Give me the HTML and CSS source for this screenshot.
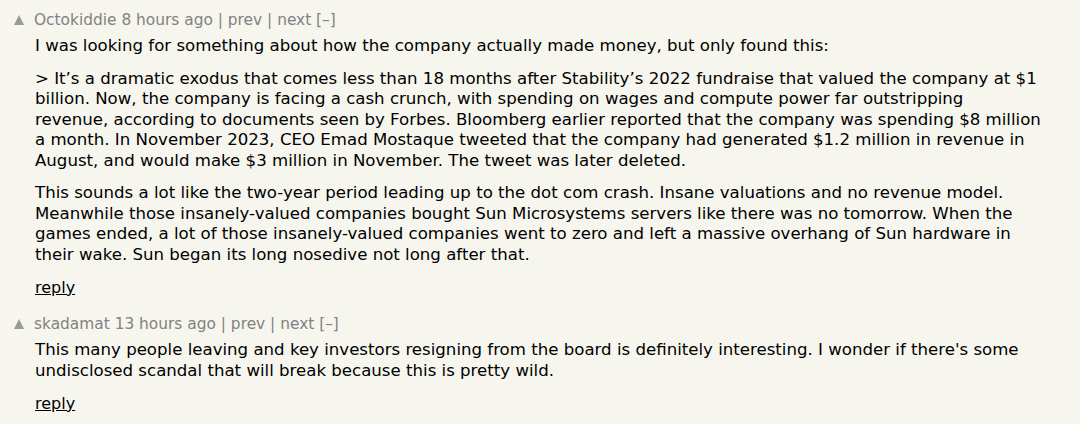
FILE: index.html
```html
<!DOCTYPE html>
<html lang="en">

<head>
  <meta charset="UTF-8">
  <title>Comments</title>
  <link rel="stylesheet" href="styles.css">
</head>

<body>
  <div class="thread">
    <div class="comment">
      <div class="head">
        <span class="vote"></span>
        <span class="meta">Octokiddie 8 hours ago | prev | next [–]</span>
      </div>
      <div class="text">
        <p>I was looking for something about how the company actually made money, but only found this:</p>
        <p>&gt; It’s a dramatic exodus that comes less than 18 months after Stability’s 2022 fundraise that valued the company at $1 billion. Now, the company is facing a cash crunch, with spending on wages and compute power far outstripping revenue, according to documents seen by Forbes. Bloomberg earlier reported that the company was spending $8 million a month. In November 2023, CEO Emad Mostaque tweeted that the company had generated $1.2 million in revenue in August, and would make $3 million in November. The tweet was later deleted.</p>
        <p>This sounds a lot like the two-year period leading up to the dot com crash. Insane valuations and no revenue model. Meanwhile those insanely-valued companies bought Sun Microsystems servers like there was no tomorrow. When the games ended, a lot of those insanely-valued companies went to zero and left a massive overhang of Sun hardware in their wake. Sun began its long nosedive not long after that.</p>
        <a class="reply" href="#">reply</a>
      </div>
    </div>
    <div class="comment">
      <div class="head">
        <span class="vote"></span>
        <span class="meta">skadamat 13 hours ago | prev | next [–]</span>
      </div>
      <div class="text">
        <p>This many people leaving and key investors resigning from the board is definitely interesting. I wonder if there's some undisclosed scandal that will break because this is pretty wild.</p>
        <a class="reply" href="#">reply</a>
      </div>
    </div>
  </div>
</body>

</html>
```

FILE: styles.css
```css
* {
  margin: 0;
  padding: 0;
}

body {
  background-color: #f6f6ef;
  font-family: Verdana, "DejaVu Sans", sans-serif;
  color: #000;
}

.thread {
  padding: 9px 0 0 14px;
}

.comment {
  margin-bottom: 15px;
}

.head {
  display: flex;
  align-items: center;
  gap: 10px;
  height: 22px;
}

.vote {
  width: 0;
  height: 0;
  border-left: 5.5px solid transparent;
  border-right: 5.5px solid transparent;
  border-bottom: 10px solid #9a9a9a;
}

.meta {
  font-size: 15.4px;
  color: #828282;
}

.text {
  padding-left: 21px;
  width: 1006.4px;
  margin-top: 5px;
  font-size: 16.6px;
  line-height: 20.5px;
}

.text p {
  margin-bottom: 12px;
}

.reply {
  display: inline-block;
  margin-top: 0.5px;
  font-size: 16px;
  line-height: 20px;
  color: #000;
  text-decoration: underline;
}
```
